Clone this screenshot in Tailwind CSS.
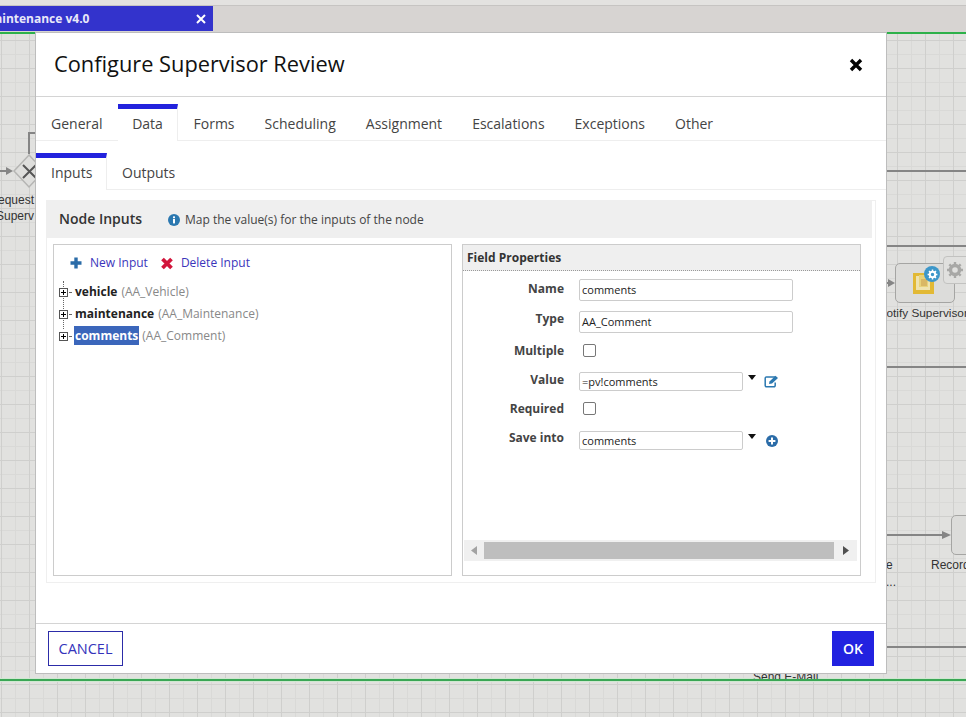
<!DOCTYPE html>
<html>
<head>
<meta charset="utf-8">
<script src="https://cdn.jsdelivr.net/npm/@tailwindcss/browser@4"></script>
</head>
<body class="m-0">
<div class="relative w-[966px] h-[717px] overflow-hidden font-['Open_Sans',sans-serif] bg-[#e1e1df]">
  <!-- top chrome -->
  <div class="h-[6px] bg-[#e3e2e0] border-b border-[#c6c4c2]"></div>
  <div class="h-[26px] bg-[#d7d4d2]">
    <div class="w-[213px] h-[25px] bg-[#3333cc] flex items-center justify-between pr-[7px] pl-0 overflow-hidden">
      <span class="text-[12px] font-bold text-[#e8e8f8] whitespace-nowrap ml-[-5px]">aintenance v4.0</span>
      <svg width="10" height="10" viewBox="0 0 10 10"><path d="M1 1L9 9M9 1L1 9" stroke="#fff" stroke-width="2"/></svg>
    </div>
  </div>

  <!-- canvas -->
  <div class="absolute left-0 top-[32px] w-[966px] h-[685px] bg-[linear-gradient(to_right,#cfcfcd_1px,transparent_1px),linear-gradient(to_bottom,#cfcfcd_1px,transparent_1px),linear-gradient(to_right,#d9d9d7_1px,transparent_1px),linear-gradient(to_bottom,#d9d9d7_1px,transparent_1px)] bg-[size:28px_28px,28px_28px,14px_14px,14px_14px] bg-[position:1px_0,0_8px,1px_0,0_8px]">
    <!-- connectors -->
    <div class="absolute left-[880px] top-[138px] w-[86px] h-[2px] bg-[#858585]"></div>
    <div class="absolute left-[880px] top-[213px] w-[86px] h-[2px] bg-[#858585]"></div>
    <div class="absolute left-[880px] top-[334px] w-[86px] h-[2px] bg-[#858585]"></div>
    <div class="absolute left-[880px] top-[614px] w-[86px] h-[2px] bg-[#858585]"></div>
    <div class="absolute left-[880px] top-[502px] w-[64px] h-[2px] bg-[#858585]"></div>
    <svg class="absolute left-[942px] top-[498px]" width="10" height="10" viewBox="0 0 10 10"><path d="M0 1L9 5L0 9Z" fill="#858585"/></svg>
    <!-- left gateway -->
    <div class="absolute left-[0px] top-[138px] w-[8px] h-[2px] bg-[#858585]"></div>
    <svg class="absolute left-[6px] top-[134px]" width="8" height="10" viewBox="0 0 8 10"><path d="M0 1L7 5L0 9Z" fill="#858585"/></svg>
    <svg class="absolute left-[12px] top-[121px]" width="32" height="36" viewBox="0 0 32 36"><path d="M17 2L32 18L17 34L2 18Z" fill="#dededc" stroke="#b5b5b3" stroke-width="1.5"/><path d="M11 12L24 25M24 12L11 25" stroke="#555" stroke-width="2"/></svg>
    <div class="absolute left-[28px] top-[100px] w-[10px] h-[22px] border-l-2 border-t-2 border-[#858585]"></div>
    <div class="absolute right-[932px] top-[160px] text-[12px] leading-[16px] text-[#333] font-['Liberation_Sans',sans-serif] whitespace-nowrap text-right">equest<br>Superv</div>
    <!-- notify node -->
    <div class="absolute left-[885px] top-[250px] w-[6px] h-[2px] bg-[#858585]"></div>
    <svg class="absolute left-[888px] top-[246px]" width="8" height="10" viewBox="0 0 8 10"><path d="M0 1L7 5L0 9Z" fill="#858585"/></svg>
    <div class="absolute left-[895px] top-[231px] w-[60px] h-[40px] rounded-[5px] border border-[#a5a5a3] bg-[#dcdcda] flex items-center justify-center">
      <svg class="mr-[4px]" width="21" height="21" viewBox="0 0 21 21"><rect width="21" height="21" fill="#e2b935"/><rect x="3" y="3" width="14" height="14" fill="#efe3b0"/><rect x="6" y="2" width="9" height="12" fill="#e8d27a"/><rect x="8" y="6" width="6" height="7" fill="#d9b765"/></svg>
    </div>
    <div class="absolute left-[924px] top-[234px] w-[16px] h-[16px] rounded-full bg-[#3d97c9] flex items-center justify-center">
      <svg width="11" height="11" viewBox="0 0 18 18"><circle cx="9" cy="9" r="4.5" fill="none" stroke="#fff" stroke-width="3.4"/><path d="M9 1V4M9 14V17M1 9H4M14 9H17M3.3 3.3L5.5 5.5M12.5 12.5L14.7 14.7M14.7 3.3L12.5 5.5M5.5 12.5L3.3 14.7" stroke="#fff" stroke-width="2.4"/></svg>
    </div>
    <div class="absolute left-[943px] top-[224px] w-[30px] h-[28px] rounded-[4px] border border-[#c2c2c0] bg-[#e0e0de] flex items-center pl-[2px]">
      <svg width="18" height="18" viewBox="0 0 18 18"><circle cx="9" cy="9" r="4.5" fill="none" stroke="#a8a8a6" stroke-width="3.4"/><path d="M9 1V4M9 14V17M1 9H4M14 9H17M3.3 3.3L5.5 5.5M12.5 12.5L14.7 14.7M14.7 3.3L12.5 5.5M5.5 12.5L3.3 14.7" stroke="#a8a8a6" stroke-width="2.4"/></svg>
    </div>
    <div class="absolute left-[878px] top-[273px] text-[11.8px] leading-[16px] text-[#333] font-['Liberation_Sans',sans-serif] whitespace-nowrap">Notify Supervisor</div>
    <!-- record node -->
    <div class="absolute left-[951px] top-[483px] w-[30px] h-[40px] rounded-[5px] border border-[#a5a5a3] bg-[#dcdcda]"></div>
    <div class="absolute left-[931px] top-[525px] text-[12px] leading-[16px] text-[#333] font-['Liberation_Sans',sans-serif] whitespace-nowrap">Record</div>
    <div class="absolute left-[886px] top-[525px] text-[12px] leading-[16px] text-[#333] font-['Liberation_Sans',sans-serif]">e</div>
    <div class="absolute left-[886px] top-[542px] text-[12px] leading-[16px] text-[#333] font-['Liberation_Sans',sans-serif]">...</div>
    <div class="absolute left-0 top-0 w-full h-[2px] bg-[#2db14a]"></div>
    <div class="absolute left-0 top-[649px] w-full h-[1px] bg-[#cfe8d0]"></div>
    <div class="absolute left-0 top-[646px] w-full h-[1px] bg-[#cfe8d0]"></div>
    <div class="absolute left-[753px] top-[637px] text-[12px] leading-[16px] text-[#333] font-['Liberation_Sans',sans-serif] whitespace-nowrap">Send E-Mail</div>
    <div class="absolute left-0 top-[647px] w-full h-[2px] bg-[#3aa655]"></div>
  </div>

  <!-- modal -->
  <div class="absolute left-[35px] top-[32px] w-[852px] h-[642px] bg-white border border-[#bdbdbd] flex flex-col">
    <div class="h-[64px] shrink-0 border-b border-[#d4d4d4] flex items-center justify-between pl-[18px] pr-[23px]">
      <h1 class="text-[21.8px] font-medium text-[#111] leading-none mb-[2px]">Configure Supervisor Review</h1>
      <svg width="14" height="14" viewBox="0 0 14 14" class="mt-[1px]"><path d="M2 2L12 12M12 2L2 12" stroke="#000" stroke-width="3.4"/></svg>
    </div>
    <!-- main tabs -->
    <div class="h-[44px] shrink-0 border-b border-[#eee] flex text-[14px] text-[#444] pl-[15px] pt-[7px]">
      <div class="pr-[15px] pt-[9px]">General</div>
      <div class="w-[60px] mb-[-1px] bg-white border-t-[5px] border-r border-[#2222dd] [border-right-color:#eee] text-center pt-[4px] pl-[1px]">Data</div>
      <div class="pl-[16px] pr-[15px] pt-[9px]">Forms</div>
      <div class="px-[15px] pt-[9px]">Scheduling</div>
      <div class="px-[15px] pt-[9px]">Assignment</div>
      <div class="px-[15px] pt-[9px]">Escalations</div>
      <div class="px-[15px] pt-[9px]">Exceptions</div>
      <div class="px-[15px] pt-[9px]">Other</div>
    </div>
    <!-- sub tabs -->
    <div class="h-[49px] shrink-0 border-b border-[#eee] flex text-[14px] text-[#444] pt-[12px]">
      <div class="w-[71px] mb-[-1px] bg-white border-t-[5px] border-r border-[#2222dd] [border-right-color:#eee] pl-[15px] pt-[4px]">Inputs</div>
      <div class="pl-[15px] pt-[9px]">Outputs</div>
    </div>
    <!-- section -->
    <div class="mt-[10px] mx-[10px] h-[383px] border border-[#efefef] flex flex-col pr-[3px]">
      <div class="h-[37px] shrink-0 bg-[#efefef] flex items-center pl-[12px]">
        <span class="text-[14px] font-semibold text-[#333] mb-[2px]">Node Inputs</span>
        <svg class="ml-[26px] mr-[5px]" width="12" height="12" viewBox="0 0 12 12"><circle cx="6" cy="6" r="6" fill="#2b78b0"/><rect x="5" y="5" width="2" height="4.4" fill="#fff"/><rect x="5" y="2.4" width="2" height="1.8" fill="#fff"/></svg>
        <span class="text-[12px] text-[#444]">Map the value(s) for the inputs of the node</span>
      </div>
      <div class="flex gap-[10px] pl-[6px] pt-[6px]">
        <!-- left -->
        <div class="w-[399px] h-[332px] border border-[#ccc] pl-[6px]">
          <div class="flex items-center text-[12px] text-[#3a35bb] pl-[10px] h-[36px]">
            <svg width="12" height="12" viewBox="0 0 12 12" class="mr-[8px]"><path d="M6 .5V11.5M.5 6H11.5" stroke="#2b6ca8" stroke-width="3.4"/></svg>
            <span>New Input</span>
            <svg width="14" height="13" viewBox="0 0 14 13" class="ml-[12px] mr-[7px]"><path d="M2.5 2L11.5 11M11.5 2L2.5 11" stroke="#d2163c" stroke-width="3.8"/></svg>
            <span>Delete Input</span>
          </div>
          <div class="relative text-[12px] text-[#888]">
            <div class="absolute left-[3px] top-[0px] h-[48px] border-l border-dotted border-[#666]"></div>
            <div class="flex items-center h-[22px]">
              <svg class="relative z-10 ml-[-1px]" width="9" height="9" viewBox="0 0 9 9"><rect x=".5" y=".5" width="8" height="8" fill="#fff" stroke="#555"/><path d="M2 4.5H7M4.5 2V7" stroke="#000"/></svg>
              <span class="w-[2px] ml-[1px] mr-[2px] border-t border-dotted border-[#666]"></span>
              <span class="font-bold text-[#222] ml-[2px]">vehicle</span><span class="ml-[4px]">(AA_Vehicle)</span>
            </div>
            <div class="flex items-center h-[22px]">
              <svg class="relative z-10 ml-[-1px]" width="9" height="9" viewBox="0 0 9 9"><rect x=".5" y=".5" width="8" height="8" fill="#fff" stroke="#555"/><path d="M2 4.5H7M4.5 2V7" stroke="#000"/></svg>
              <span class="w-[2px] ml-[1px] mr-[2px] border-t border-dotted border-[#666]"></span>
              <span class="font-bold text-[#222] ml-[2px]">maintenance</span><span class="ml-[4px]">(AA_Maintenance)</span>
            </div>
            <div class="flex items-center h-[22px]">
              <svg class="relative z-10 ml-[-1px]" width="9" height="9" viewBox="0 0 9 9"><rect x=".5" y=".5" width="8" height="8" fill="#fff" stroke="#555"/><path d="M2 4.5H7M4.5 2V7" stroke="#000"/></svg>
              <span class="w-[2px] ml-[1px] mr-[1px] border-t border-dotted border-[#666]"></span>
              <span class="font-bold text-white bg-[#3b66bb] px-[1px] ml-[2px] h-[19px] leading-[19px] mb-[2px]">comments</span><span class="ml-[3px]">(AA_Comment)</span>
            </div>
          </div>
        </div>
        <!-- right -->
        <div class="relative w-[399px] h-[332px] border border-[#ccc]">
          <div class="h-[26px] bg-[#efefef] border-b border-dotted border-[#999] flex items-center pl-[4px] text-[12px] font-bold text-[#333]">Field Properties</div>
          <div class="grid grid-cols-[101px_1fr] grid-rows-[32px_32px_25px_37px_23px_35px] gap-x-[15px] text-[12px] pt-[3px] items-center">
            <div class="text-right font-bold text-[#444] mb-[2px]">Name</div>
            <div class="w-[214px] h-[22px] border border-[#ccc] rounded-[2px] px-[2px] leading-[20px] text-[11px] text-[#222]">comments</div>
            <div class="text-right font-bold text-[#444] mb-[6px]">Type</div>
            <div class="w-[214px] h-[22px] border border-[#ccc] rounded-[2px] px-[2px] leading-[20px] text-[11px] text-[#222]">AA_Comment</div>
            <div class="text-right font-bold text-[#444]">Multiple</div>
            <div class="w-[13px] h-[13px] border border-[#777] rounded-[2px] ml-[4px] bg-white"></div>
            <div class="text-right font-bold text-[#444] mb-[3px]">Value</div>
            <div class="flex items-center">
              <div class="w-[164px] h-[19px] border border-[#ccc] rounded-[2px] px-[2px] leading-[18px] text-[11px] text-[#222]">=pv!comments</div>
              <svg class="ml-[5px] mb-[8px]" width="8" height="5" viewBox="0 0 8 5"><path d="M0 0H8L4 5Z" fill="#111"/></svg>
              <svg class="ml-[8px]" width="15" height="13" viewBox="0 0 15 13"><path d="M11 2H2.5A1.2 1.2 0 0 0 1.2 3.2V10.5A1.2 1.2 0 0 0 2.5 11.7H10A1.2 1.2 0 0 0 11.2 10.5V7.5" fill="none" stroke="#2b78b0" stroke-width="1.5"/><path d="M5 9L5.5 6.5L11.5 .8L14 3L8 8.6Z" fill="#2b78b0"/></svg>
            </div>
            <div class="text-right font-bold text-[#444] mb-[5px]">Required</div>
            <div class="w-[13px] h-[13px] border border-[#777] rounded-[2px] ml-[4px] bg-white mb-[6px]"></div>
            <div class="text-right font-bold text-[#444] mb-[5px]">Save into</div>
            <div class="flex items-center">
              <div class="w-[164px] h-[19px] border border-[#ccc] rounded-[2px] px-[2px] leading-[18px] text-[11px] text-[#222]">comments</div>
              <svg class="ml-[5px] mb-[8px]" width="8" height="5" viewBox="0 0 8 5"><path d="M0 0H8L4 5Z" fill="#111"/></svg>
              <svg class="ml-[10px]" width="12" height="12" viewBox="0 0 12 12"><circle cx="6" cy="6" r="6" fill="#2b6ca8"/><path d="M6 2.6V9.4M2.6 6H9.4" stroke="#fff" stroke-width="2"/></svg>
            </div>
          </div>
          <div class="absolute left-[1px] bottom-[14px] w-[393px] h-[21px] bg-[#f0f0f0] flex items-center">
            <div class="w-[20px] flex justify-center"><svg width="6" height="9" viewBox="0 0 6 9"><path d="M6 0V9L0 4.5Z" fill="#a3a3a3"/></svg></div>
            <div class="w-[350px] h-[17px] bg-[#bebebe]"></div>
            <div class="w-[23px] flex justify-center"><svg width="6" height="9" viewBox="0 0 6 9"><path d="M0 0V9L6 4.5Z" fill="#505050"/></svg></div>
          </div>
        </div>
      </div>
    </div>
    <div class="flex-1"></div>
    <div class="h-[50px] shrink-0 border-t border-[#d4d4d4] flex items-center justify-between px-[12px] pb-[1px]">
      <div class="w-[75px] h-[35px] border border-[#2c2ca8] flex items-center justify-center pt-[1px] text-[14.5px] font-medium text-[#3333bb]">CANCEL</div>
      <div class="w-[42px] h-[35px] bg-[#2222e0] flex items-center justify-center text-[14px] font-semibold text-white">OK</div>
    </div>
  </div>
</div>
</body>
</html>
